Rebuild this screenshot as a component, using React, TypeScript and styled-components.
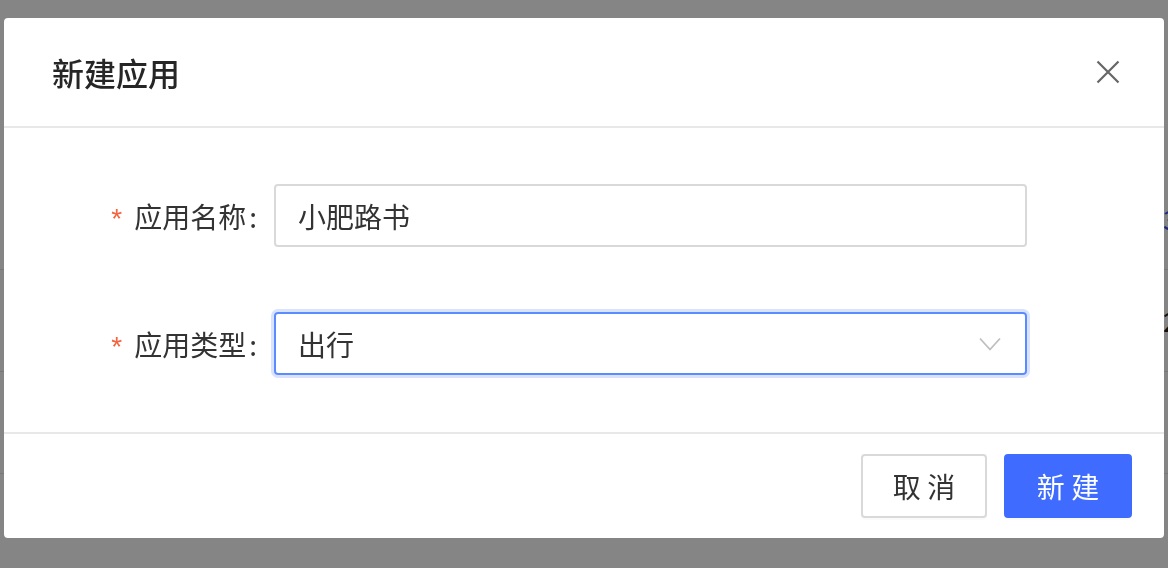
import React, { useState } from 'react';
import styled, { createGlobalStyle } from 'styled-components';

const GlobalStyle = createGlobalStyle`
  html, body {
    margin: 0;
    padding: 0;
    background: #ffffff;
    font-family: "Noto Sans CJK SC", "Noto Sans", sans-serif;
    overflow: hidden;
  }
  * {
    box-sizing: border-box;
  }
`;

const PageBehind = styled.div`
  width: 1168px;
  height: 568px;
  padding-top: 168px;
  display: flex;
  flex-direction: column;
`;

const BehindRow = styled.div`
  height: 102px;
  border-bottom: 1px solid #e6e6e6;
  display: flex;
  align-items: center;
  padding-left: 1163px;
  font-size: 26px;
  white-space: nowrap;
`;

const BehindText = styled.span<{ $link?: boolean }>`
  color: ${p => (p.$link ? '#2f54eb' : '#222')};
`;

const Mask = styled.div`
  position: fixed;
  inset: 0;
  background: rgba(0, 0, 0, 0.48);
  display: flex;
  align-items: flex-start;
  padding: 18px 0 0 4px;
`;

const Modal = styled.div`
  width: 1160px;
  height: 520px;
  background: #ffffff;
  border-radius: 4px;
  display: flex;
  flex-direction: column;
  overflow: hidden;
`;

const Header = styled.div`
  height: 110px;
  border-bottom: 2px solid #e8e8e8;
  padding: 0 44px 0 48px;
  display: flex;
  align-items: center;
  justify-content: space-between;
`;

const Title = styled.div`
  font-size: 32px;
  font-weight: 500;
  color: #262626;
  line-height: 1;
`;

const CloseButton = styled.button`
  width: 24px;
  height: 24px;
  padding: 0;
  border: none;
  background: transparent;
  cursor: pointer;
  display: flex;
  svg {
    display: block;
  }
`;

const Body = styled.div`
  flex: 1;
  padding: 56px 137px 0 0;
  display: flex;
  flex-direction: column;
  gap: 65px;
`;

const FormItem = styled.div`
  display: flex;
  align-items: center;
`;

const Label = styled.label`
  width: 270px;
  padding-right: 17px;
  text-align: right;
  font-size: 28px;
  color: #333333;
  white-space: nowrap;
`;

const Required = styled.span`
  color: #f5633f;
  margin-right: 12px;
  font-family: "Liberation Sans", sans-serif;
  font-size: 28px;
`;

const Colon = styled.span`
  margin-left: 3px;
`;

const Field = styled.div<{ $focused?: boolean }>`
  flex: 1;
  height: 63px;
  border: 2px solid ${p => (p.$focused ? '#5b8cff' : '#d9d9d9')};
  border-radius: 4px;
  box-shadow: ${p => (p.$focused ? '0 0 0 3px rgba(64, 112, 255, 0.2)' : 'none')};
  display: flex;
  align-items: center;
  padding: 0 24px 0 22px;
`;

const TextInput = styled.input`
  flex: 1;
  border: none;
  outline: none;
  padding: 0;
  font-family: inherit;
  font-size: 28px;
  color: #333333;
  background: transparent;
`;

const SelectValue = styled.span`
  flex: 1;
  font-size: 28px;
  color: #333333;
`;

const Footer = styled.div`
  height: 106px;
  border-top: 2px solid #e8e8e8;
  padding: 0 32px 0 0;
  display: flex;
  align-items: center;
  justify-content: flex-end;
  gap: 17px;
`;

const Button = styled.button<{ $primary?: boolean }>`
  height: 64px;
  width: ${p => (p.$primary ? '128px' : '126px')};
  border-radius: 4px;
  border: 2px solid ${p => (p.$primary ? '#3f6cff' : '#d9d9d9')};
  background: ${p => (p.$primary ? '#3f6cff' : '#ffffff')};
  color: ${p => (p.$primary ? '#ffffff' : '#333333')};
  box-shadow: 0 2px 0 rgba(0, 0, 0, 0.02);
  font-family: inherit;
  font-size: 28px;
  padding: 0;
  cursor: pointer;
`;

const App = (): JSX.Element => {
  const [name, setName] = useState('小肥路书');

  return (
    <>
      <GlobalStyle />
      <PageBehind>
        <BehindRow>
          <BehindText $link>3</BehindText>
        </BehindRow>
        <BehindRow>
          <BehindText>2</BehindText>
        </BehindRow>
        <BehindRow />
      </PageBehind>
      <Mask>
        <Modal>
          <Header>
            <Title>新建应用</Title>
            <CloseButton aria-label="close">
              <svg width="24" height="24" viewBox="0 0 24 24">
                <path
                  d="M1.5 1.5 L22.5 22.5 M22.5 1.5 L1.5 22.5"
                  stroke="#666666"
                  strokeWidth="2.2"
                  fill="none"
                />
              </svg>
            </CloseButton>
          </Header>
          <Body>
            <FormItem>
              <Label>
                <Required>*</Required>应用名称<Colon>:</Colon>
              </Label>
              <Field>
                <TextInput
                  value={name}
                  onChange={e => setName(e.target.value)}
                />
              </Field>
            </FormItem>
            <FormItem>
              <Label>
                <Required>*</Required>应用类型<Colon>:</Colon>
              </Label>
              <Field $focused>
                <SelectValue>出行</SelectValue>
                <svg width="22" height="14" viewBox="0 0 22 14">
                  <path
                    d="M1 1.5 L11 12.5 L21 1.5"
                    stroke="#bfbfbf"
                    strokeWidth="1.8"
                    fill="none"
                  />
                </svg>
              </Field>
            </FormItem>
          </Body>
          <Footer>
            <Button>取 消</Button>
            <Button $primary>新 建</Button>
          </Footer>
        </Modal>
      </Mask>
    </>
  );
};

export default App;
